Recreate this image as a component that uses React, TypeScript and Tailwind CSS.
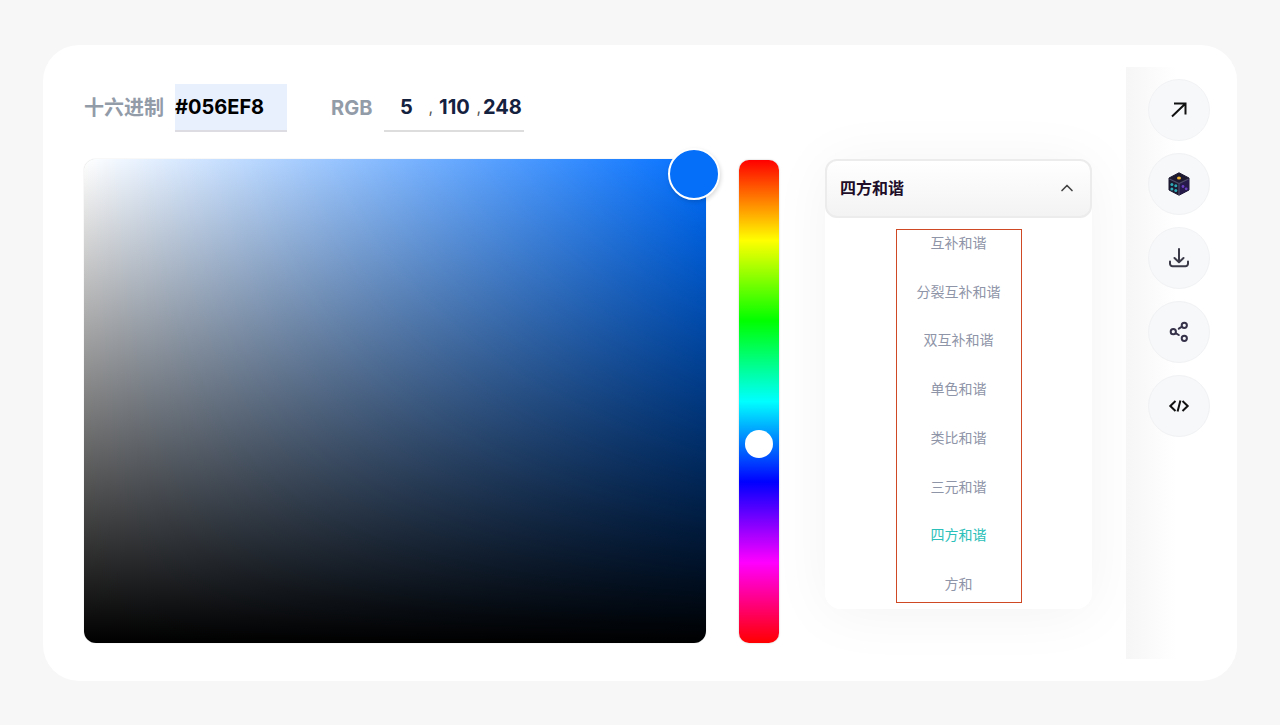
import React, { useState } from "react";
import { ChevronUp, ChevronDown } from "lucide-react";

const HARMONIES = [
  "互补和谐",
  "分裂互补和谐",
  "双互补和谐",
  "单色和谐",
  "类比和谐",
  "三元和谐",
  "四方和谐",
  "方和",
];

// saturation / value of the picked colour, 0..1
const SATURATION = 0.98;
const VALUE = 0.97;

const stroke = {
  fill: "none",
  strokeWidth: 2,
  strokeLinecap: "round" as const,
  strokeLinejoin: "round" as const,
};

const ArrowIcon = () => (
  <svg viewBox="0 0 24 24" className="size-6" {...stroke} strokeLinecap="butt" strokeLinejoin="miter" stroke="#111111">
    <path d="M5 18.5 18.5 5.5M7 5.5h11.500v11" />
  </svg>
);

const DiceIcon = () => (
  <svg viewBox="0 0 24 24" className="size-6">
    <path d="M12 .8 22 6v12L12 23.200 2 18V6z" fill="#1c1930" stroke="#1c1930" strokeLinejoin="round" />
    <path d="M12 11.500 22 6.500V18l-10 5.200z" fill="#251a4a" />
    <path d="M2.500 7 12 11.500 21.500 7M12 11.500V23" fill="none" stroke="#4d4a68" strokeWidth="1.200" />
    <ellipse cx="12" cy="6" rx="2" ry="1.500" fill="#f2b632" />
    <g fill="#2fa9b5">
      <circle cx="4.900" cy="12.600" r="1.500" />
      <circle cx="8.800" cy="13.800" r="1.500" />
      <circle cx="4.900" cy="16.900" r="1.500" />
      <circle cx="8.800" cy="18.400" r="1.500" />
    </g>
    <g fill="#6a3fc0">
      <circle cx="16" cy="14.500" r="1.400" />
      <circle cx="19.200" cy="16.800" r="1.400" />
    </g>
  </svg>
);

const DownloadIcon = () => (
  <svg viewBox="0 0 24 24" className="size-6" {...stroke} stroke="#3a3a48">
    <path d="M12 3v13M7.500 12l4.500 4.200 4.500-4.200" />
    <path d="M3 15.500v2.200a2.500 2.500 0 0 0 2.500 2.500h13a2.500 2.500 0 0 0 2.500-2.500v-2.200" />
  </svg>
);

const ShareIcon = () => (
  <svg viewBox="0 0 24 24" className="size-6" {...stroke} stroke="#35324a">
    <circle cx="6.300" cy="11.700" r="2.600" />
    <circle cx="17.300" cy="5.300" r="2.600" />
    <circle cx="17.300" cy="18.300" r="2.600" />
    <path d="M15 6.700l-3.200 2M8.600 13.200l3.200 1.800" />
  </svg>
);

const CodeIcon = () => (
  <svg viewBox="0 0 24 24" className="size-6" {...stroke} strokeLinecap="butt" strokeLinejoin="miter" stroke="#111111">
    <path d="M8.500 7 3.300 12l5.200 5M15.500 7l5.200 5-5.200 5M13.400 6.500l-2.800 11" />
  </svg>
);

const ACTIONS = [
  { label: "打开", icon: <ArrowIcon /> },
  { label: "随机", icon: <DiceIcon /> },
  { label: "下载", icon: <DownloadIcon /> },
  { label: "分享", icon: <ShareIcon /> },
  { label: "代码", icon: <CodeIcon /> },
];

const ColorValues: React.FC = () => {
  const [hex, setHex] = useState("#056EF8");
  const [rgb, setRgb] = useState(["5", "110", "248"]);

  const setChannel = (index: number, value: string) => {
    setRgb(rgb.map((c, i) => (i === index ? value : c)));
  };

  return (
    <div className="flex items-center gap-11 text-[20px] font-bold">
      <div className="flex items-center gap-[11px]">
        <label htmlFor="hex" className="text-[#929ba8]">十六进制</label>
        <input
          id="hex"
          value={hex}
          onChange={(e) => setHex(e.target.value)}
          className="h-12 w-28 border-b-2 border-[#dcdce2] bg-[#e8f0fe] text-black outline-none"
        />
      </div>
      <div className="flex items-center gap-3">
        <label htmlFor="rgb-0" className="text-[#929ba8]">RGB</label>
        <div className="flex h-12 items-center border-b-2 border-[#dddddd] text-[#14213f]">
          {rgb.map((channel, i) => (
            <React.Fragment key={i}>
              {i > 0 && <span className="w-1 text-base font-normal text-[#555555]">,</span>}
              <input
                id={`rgb-${i}`}
                aria-label={["R", "G", "B"][i]}
                value={channel}
                onChange={(e) => setChannel(i, e.target.value)}
                className="w-11 text-center outline-none"
              />
            </React.Fragment>
          ))}
        </div>
      </div>
    </div>
  );
};

const HarmonySelect: React.FC = () => {
  const [open, setOpen] = useState(true);
  const [selected, setSelected] = useState("四方和谐");

  return (
    <div className="w-[267px] shrink-0 self-start rounded-2xl shadow-[0_4px_60px_rgba(0,0,0,0.05)]">
      <button
        type="button"
        aria-haspopup="listbox"
        aria-expanded={open}
        onClick={() => setOpen(!open)}
        className="flex h-[59px] w-full items-center justify-between rounded-xl border-2 border-[#ececec] bg-linear-to-b from-white to-[#f3f3f3] px-[13px] pb-0.5 text-base font-bold text-[#210d28]"
      >
        {selected}
        {open ? <ChevronUp size={20} color="#444444" /> : <ChevronDown size={20} color="#444444" />}
      </button>
      {open && (
        <div className="mt-px rounded-2xl bg-white pt-[10px] pb-[6px]">
          <ul role="listbox" className="mx-auto flex min-h-[374px] w-[126px] flex-col justify-between border border-[#cf4a24] pb-[5px]">
            {HARMONIES.map((name) => (
              <li key={name} role="option" aria-selected={name === selected}>
                <button
                  type="button"
                  onClick={() => setSelected(name)}
                  className={`block w-full text-sm leading-[26px] ${
                    name === selected ? "text-[#2bc0b9]" : "text-[#8f95a8]"
                  }`}
                >
                  {name}
                </button>
              </li>
            ))}
          </ul>
        </div>
      )}
    </div>
  );
};

const App: React.FC = () => {
  const [hue, setHue] = useState(214);

  return (
    <div className="flex min-h-screen flex-col bg-[#f7f7f7] px-[43px] pt-[45px] pb-11 font-['Inter','Noto_Sans_CJK_SC',sans-serif]">
      <main className="flex flex-1 overflow-hidden rounded-[36px] bg-white">
        <section className="flex flex-1 flex-col gap-[27px] pt-[39px] pr-[34px] pb-[38px] pl-[41px]">
          <ColorValues />
          <div className="flex min-h-[484px] flex-1">
            <div
              className="relative flex-1 rounded-xl shadow-[0_0_1px_rgba(0,0,0,0.3)]"
              style={{
                backgroundImage: `linear-gradient(to top, #000, transparent), linear-gradient(to right, #fff, hsl(${hue} 100% 50%))`,
              }}
            >
              <div
                role="slider"
                aria-label="颜色"
                aria-valuenow={98}
                tabIndex={0}
                className="absolute size-[52px] -translate-x-1/2 -translate-y-1/2 rounded-full border-2 border-white shadow-[1px_2px_4px_rgba(0,0,0,0.15)]"
                style={{
                  left: `${SATURATION * 100}%`,
                  top: `${(1 - VALUE) * 100}%`,
                  backgroundColor: `hsl(${hue} 96% 50%)`,
                }}
              />
            </div>
            <input
              type="range"
              aria-label="色相"
              min={0}
              max={360}
              value={hue}
              onChange={(e) => setHue(Number(e.target.value))}
              className="mt-px ml-[33px] w-10 shrink-0 cursor-pointer appearance-none rounded-[10px] bg-[linear-gradient(to_bottom,#f00,#ff0,#0f0,#0ff,#00f,#f0f,#f00)] shadow-[0_0_2px_rgba(0,0,0,0.25)] [writing-mode:vertical-lr] [&::-webkit-slider-thumb]:size-7 [&::-webkit-slider-thumb]:appearance-none [&::-webkit-slider-thumb]:rounded-full [&::-webkit-slider-thumb]:bg-white"
            />
            <div className="ml-[46px] flex">
              <HarmonySelect />
            </div>
          </div>
        </section>
        <aside className="my-[22px] flex w-[111px] shrink-0 flex-col items-center gap-3 bg-[linear-gradient(to_right,#f6f6f6,#ffffff_50px)] pt-3 pr-1.5">
          {ACTIONS.map(({ label, icon }) => (
            <button
              key={label}
              type="button"
              aria-label={label}
              className="flex size-[62px] items-center justify-center rounded-full border border-[#f1f2f4] bg-[#f7f8fa]"
            >
              {icon}
            </button>
          ))}
        </aside>
      </main>
    </div>
  );
};

export default App;
